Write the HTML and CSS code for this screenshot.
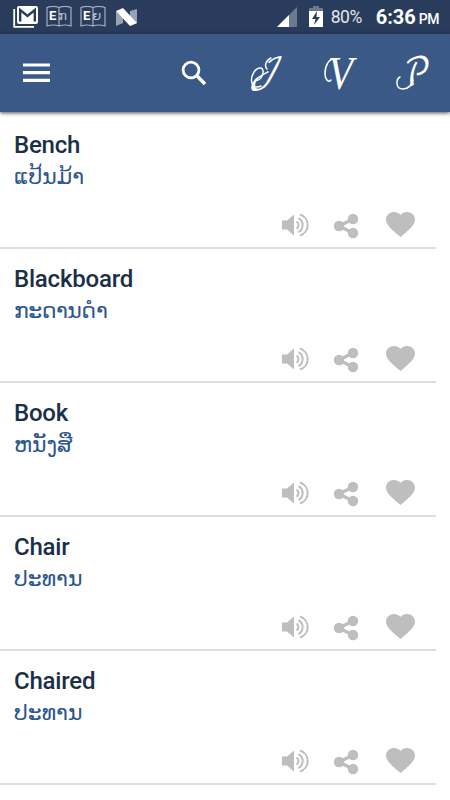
FILE: index.html
```html
<!DOCTYPE html>
<html lang="en">
<head>
    <meta charset="UTF-8">
    <meta name="viewport" content="width=device-width, initial-scale=1.0">
    <title>English Lao Dictionary</title>
    <link rel="stylesheet" href="styles.css">
</head>
<body>
    <svg class="defs">
        <symbol id="sound" viewBox="0 0 28 24">
            <path d="M1 7.500h5l7-6v21l-7-6H1z" fill="#bebebe"/>
            <path d="M15.500 8.500a4 4 0 0 1 0 7M17.500 5a8 8 0 0 1 0 14M19 1.500a11 11 0 0 1 0 21" fill="none" stroke="#bebebe" stroke-width="2"/>
        </symbol>
        <symbol id="share" viewBox="0 0 26 26">
            <path d="M20 6L6 13l14 7" fill="none" stroke="#bebebe" stroke-width="3.500"/>
            <circle cx="20" cy="6" r="5.200" fill="#bebebe"/>
            <circle cx="6" cy="13" r="5.200" fill="#bebebe"/>
            <circle cx="20" cy="20" r="5.200" fill="#bebebe"/>
        </symbol>
        <symbol id="heart" viewBox="2 3 20 18.35" preserveAspectRatio="none">
            <path d="M12 21.35l-1.45-1.32C5.4 15.36 2 12.28 2 8.5 2 5.42 4.42 3 7.5 3c1.74 0 3.41.81 4.5 2.09C13.09 3.81 14.76 3 16.5 3 19.58 3 22 5.42 22 8.5c0 3.78-3.4 6.86-8.55 11.54z" fill="#bebebe"/>
        </symbol>
    </svg>
    <div class="status">
        <svg class="gmail" width="26" height="22" viewBox="0 0 26 22">
            <path d="M1.200 3v17.800H21" fill="none" stroke="#fff" stroke-width="1.800"/>
            <rect x="4" y="0" width="21" height="18" rx="2" fill="#fff"/>
            <path d="M7.200 15.500V4l7.300 6 7.300-6v11.500" fill="none" stroke="#293c5c" stroke-width="2.400"/>
        </svg>
        <div class="dict">
            <svg width="26" height="22" viewBox="0 0 26 22"><path d="M1 20V1.500q6-2 12 0 6-2 12 0V20q-6-2-12 0-6-2-12 0zM13 1.500V20" fill="none" stroke="#a5b1c4" stroke-width="1.200"/></svg>
            <span><b>E</b><i>ກ</i></span>
        </div>
        <div class="dict">
            <svg width="26" height="22" viewBox="0 0 26 22"><path d="M1 20V1.500q6-2 12 0 6-2 12 0V20q-6-2-12 0-6-2-12 0zM13 1.500V20" fill="none" stroke="#a5b1c4" stroke-width="1.200"/></svg>
            <span><b>E</b><i>ຍ</i></span>
        </div>
        <svg class="nougat" width="21" height="18" viewBox="0 0 21 18">
            <path d="M0 3l7 4v8l-7 3zM14 3l7-2v14l-7 3z" fill="#98a2b2"/>
            <path d="M0 3l7-3 14 15-7 3z" fill="#fff"/>
        </svg>
        <div class="right">
            <svg width="20" height="20" viewBox="0 0 20 20">
                <path d="M20 0v20H0z" fill="#6b7991"/>
                <path d="M12 8v12H0z" fill="#fff"/>
            </svg>
            <svg class="battery" width="14" height="21" viewBox="0 0 14 21">
                <path d="M4 0h6v2h4v4H0V2h4z" fill="#6b7991"/>
                <path d="M0 5h14v16H0z" fill="#fff"/>
                <path d="M8 5l-5 8h3.500L5 19l6-8H7.500z" fill="#293c5c"/>
            </svg>
            <span class="percent">80%</span>
            <span class="time">6:36</span>
            <span class="pm">PM</span>
        </div>
    </div>
    <div class="toolbar">
        <svg class="menu" width="27" height="20" viewBox="0 0 27 20"><path d="M0 2h27M0 9.700h27M0 17.300h27" stroke="#fff" stroke-width="3.200"/></svg>
        <svg class="search" width="26" height="26" viewBox="0 0 26 26">
            <circle cx="10" cy="10" r="7.900" fill="none" stroke="#fff" stroke-width="2.800"/>
            <path d="M15.500 15.500l8.500 8.500" stroke="#fff" stroke-width="3.300"/>
        </svg>
        <!-- letters with their swashes: idioms, verbs, phrases -->
        <svg class="letter idiom" width="36" height="40" viewBox="0 0 36 40">
            <text x="0" y="29" font-size="34" transform="translate(9 0) skewX(-16)">𝒥</text>
            <path d="M7 27c5 2 10-10 5-12-6-1-11 9-9 15 1 4 5 5 9 3M18 16c-3-3-1-9 4-11" />
        </svg>
        <svg class="letter verb" width="36" height="40" viewBox="0 0 36 40">
            <text x="6" y="36" font-size="46" textLength="25" lengthAdjust="spacingAndGlyphs">V</text>
            <path d="M9 27c-2 3-6 0-6-6C3 12 7 6 12 6"/>
        </svg>
        <svg class="letter phrase" width="36" height="40" viewBox="0 0 36 40">
            <text x="9" y="33" font-size="39" textLength="27" lengthAdjust="spacingAndGlyphs">𝒫</text>
            <path d="M5 24c-4 2-5 12 3 12 6 0 8-4 10-9"/>
        </svg>
    </div>
    <div class="list">
        <div class="item">
            <h3>Bench</h3>
            <p>ແປ້ນມ້າ</p>
            <div class="actions"><svg class="sound"><use href="#sound"/></svg><svg class="share"><use href="#share"/></svg><svg class="heart"><use href="#heart"/></svg></div>
        </div>
        <div class="item">
            <h3>Blackboard</h3>
            <p class="long">ກະດານດຳ</p>
            <div class="actions"><svg class="sound"><use href="#sound"/></svg><svg class="share"><use href="#share"/></svg><svg class="heart"><use href="#heart"/></svg></div>
        </div>
        <div class="item">
            <h3>Book</h3>
            <p>ຫນັງສື</p>
            <div class="actions"><svg class="sound"><use href="#sound"/></svg><svg class="share"><use href="#share"/></svg><svg class="heart"><use href="#heart"/></svg></div>
        </div>
        <div class="item">
            <h3>Chair</h3>
            <p>ປະທານ</p>
            <div class="actions"><svg class="sound"><use href="#sound"/></svg><svg class="share"><use href="#share"/></svg><svg class="heart"><use href="#heart"/></svg></div>
        </div>
        <div class="item">
            <h3>Chaired</h3>
            <p>ປະທານ</p>
            <div class="actions"><svg class="sound"><use href="#sound"/></svg><svg class="share"><use href="#share"/></svg><svg class="heart"><use href="#heart"/></svg></div>
        </div>
    </div>
</body>
</html>
```
FILE: styles.css
```css
* {
    box-sizing: border-box;
}
body {
    margin: 0;
    height: 800px;
    overflow: hidden;
    background: #fff;
    font-family: Roboto, "DejaVu Sans", sans-serif;
}
svg {
    display: block;
    flex: none;
}
.defs {
    display: none;
}
.status {
    height: 34px;
    padding: 0 11px 0 13px;
    background: #293c5c;
    color: #fff;
    display: flex;
    align-items: center;
}
.dict {
    position: relative;
    margin-left: 8px;
}
.gmail + .dict {
    margin-left: 7px;
}
.dict span {
    position: absolute;
    left: 3px;
    top: 2px;
    display: flex;
    gap: 2px;
    font-size: 13px;
    line-height: 16px;
}
.dict i {
    font-style: normal;
    color: #bcc5d3;
}
.nougat {
    margin-left: 10px;
}
.right {
    margin-left: auto;
    display: flex;
    align-items: center;
    white-space: nowrap;
}
.battery {
    margin: -2px 0 0 12px;
}
.percent {
    margin-left: 8px;
    font-size: 17.5px;
    letter-spacing: -0.5px;
    color: #e2e6ec;
}
.time {
    margin-left: 14px;
    font-size: 20px;
    font-weight: 700;
}
.pm {
    margin: 3px 0 0 3px;
    font-size: 14px;
    font-weight: 500;
    letter-spacing: -0.5px;
}
.toolbar {
    position: relative;
    height: 78px;
    padding: 0 18px 0 23px;
    background: #3b5987;
    color: #fff;
    display: flex;
    align-items: center;
    box-shadow: 0 1px 4px rgba(0, 0, 0, 0.7);
}
.search {
    margin-left: 131px;
}
.letter {
    overflow: visible;
}
.letter text {
    font-family: "DejaVu Math TeX Gyre", "DejaVu Serif", serif;
    fill: #fff;
}
.letter.verb text {
    font-family: "Liberation Serif", serif;
    font-style: italic;
}
.letter path {
    fill: none;
    stroke: #fff;
    stroke-width: 1.5;
    stroke-linecap: round;
}
.idiom {
    margin-left: 42px;
}
.verb,
.phrase {
    margin-left: 37px;
}
.list {
    padding-top: 3px;
}
.item {
    width: 436px;
    height: 134px;
    padding: 16px 21px 0 14px;
    border-bottom: 2px solid #dedede;
}
.item h3 {
    margin: 0;
    font-size: 24px;
    font-weight: 500;
    line-height: 28px;
    letter-spacing: -0.2px;
    color: #1b3047;
}
.item p {
    margin: 0;
    height: 36px;
    font-family: "DejaVu Sans", sans-serif;
    font-size: 22px;
    line-height: 36px;
    color: #2d5591;
}
.item p.long {
    letter-spacing: -0.5px;
}
.actions {
    height: 26px;
    margin-top: 16px;
    display: flex;
    justify-content: flex-end;
}
.sound {
    width: 28px;
    height: 24px;
    margin-top: 2px;
}
.share {
    width: 26px;
    height: 26px;
    margin: 2px 0 0 24px;
}
.heart {
    width: 29px;
    height: 25px;
    margin: 1px 0 0 27px;
}
```
